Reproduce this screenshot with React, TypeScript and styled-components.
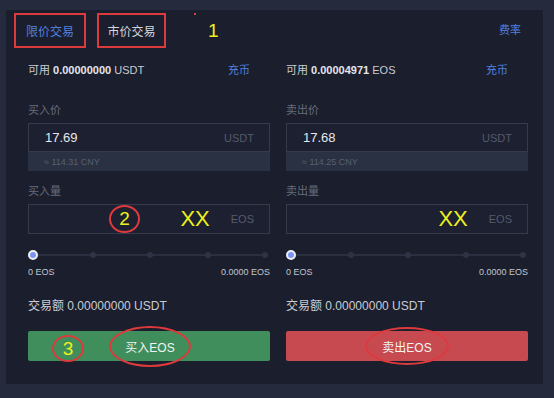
import React from "react"
import styled, { createGlobalStyle } from "styled-components"

const colors = {
  page: "#252a3c",
  panel: "#1b1e2c",
  text: "#c9ccd4",
  muted: "#666c7d",
  blue: "#4f80e0",
  border: "#363b4c",
  field: "#1c2030",
  strip: "#2a3142",
  green: "#3f8e5c",
  red: "#c84a51",
  mark: "#dc3a3d",
  yellow: "#eef01c",
}

const GlobalStyle = createGlobalStyle`
  html, body {
    margin: 0;
    padding: 0;
    background: ${colors.page};
    font-family: "Liberation Sans", "Noto Sans CJK SC", sans-serif;
  }
`

type Side = "buy" | "sell"

const sides = {
  buy: {
    balance: "0.00000000",
    coin: "USDT",
    priceLabel: "买入价",
    price: "17.69",
    cny: "≈ 114.31 CNY",
    amountLabel: "买入量",
    action: "买入EOS",
  },
  sell: {
    balance: "0.00004971",
    coin: "EOS",
    priceLabel: "卖出价",
    price: "17.68",
    cny: "≈ 114.25 CNY",
    amountLabel: "卖出量",
    action: "卖出EOS",
  },
}

const TradeColumn: React.FC<{ side: Side }> = ({ side }) => {
  const d = sides[side]
  return (
    <Column>
      <BalanceRow>
        <span>
          可用 <b>{d.balance}</b> {d.coin}
        </span>
        <Link>充币</Link>
      </BalanceRow>
      <Label $top={19}>{d.priceLabel}</Label>
      <Field>
        <Value>{d.price}</Value>
        <Unit>USDT</Unit>
      </Field>
      <CnyStrip>{d.cny}</CnyStrip>
      <Label $top={12}>{d.amountLabel}</Label>
      <Field $height={30}>
        {side === "buy" && <StepMark>2</StepMark>}
        <Value />
        <Note>XX</Note>
        <Unit>EOS</Unit>
      </Field>
      <Slider>
        <Track />
        {[0, 1, 2, 3, 4].map((i) => (
          <Stop key={i} $active={i === 0} />
        ))}
      </Slider>
      <SliderLabels>
        <span>0 EOS</span>
        <span>0.0000 EOS</span>
      </SliderLabels>
      <Total>交易额 0.00000000 USDT</Total>
      <ActionButton $side={side}>
        {side === "buy" && <ButtonMark>3</ButtonMark>}
        <Circled $side={side}>{d.action}</Circled>
      </ActionButton>
    </Column>
  )
}

export default function App() {
  return (
    <>
      <GlobalStyle />
      <Page>
        <Panel>
          <TabBar>
            <Tab $active $width={72}>
              限价交易
            </Tab>
            <Tab $width={69}>市价交易</Tab>
            <Dot />
            <StepOne>1</StepOne>
            <Fee>费率</Fee>
          </TabBar>
          <Columns>
            <TradeColumn side="buy" />
            <TradeColumn side="sell" />
          </Columns>
        </Panel>
      </Page>
    </>
  )
}

const Page = styled.div`
  width: 554px;
  height: 398px;
  padding: 10px 11px 14px 6px;
  box-sizing: border-box;
`

const Panel = styled.div`
  height: 100%;
  background: ${colors.panel};
  display: flex;
  flex-direction: column;
`

const TabBar = styled.div`
  height: 42px;
  display: flex;
  align-items: flex-start;
  padding: 3px 22px 0 8px;
  gap: 11px;
  position: relative;
`

const Tab = styled.div<{ $active?: boolean; $width: number }>`
  width: ${(p) => p.$width}px;
  height: 35px;
  box-sizing: border-box;
  border: 2px solid ${colors.mark};
  display: flex;
  align-items: center;
  justify-content: center;
  white-space: nowrap;
  font-size: 12px;
  color: ${(p) => (p.$active ? colors.blue : "#d4d6dc")};
`

const Dot = styled.span`
  position: absolute;
  left: 188px;
  top: 3px;
  width: 2px;
  height: 2px;
  background: ${colors.mark};
`

const StepOne = styled.span`
  margin-left: 31px;
  line-height: 35px;
  font-size: 19px;
  color: ${colors.yellow};
`

const Fee = styled.span`
  margin-left: auto;
  line-height: 35px;
  font-size: 11px;
  color: ${colors.blue};
`

const Columns = styled.div`
  display: grid;
  grid-template-columns: 242px 242px;
  gap: 16px;
  padding: 0 15px 0 22px;
`

const Column = styled.div`
  display: flex;
  flex-direction: column;
`

const BalanceRow = styled.div`
  height: 28px;
  display: flex;
  align-items: center;
  justify-content: space-between;
  padding-right: 20px;
  font-size: 11px;
  color: ${colors.text};
  b {
    color: #e4e6ec;
  }
`

const Link = styled.span`
  color: ${colors.blue};
`

const Label = styled.div<{ $top: number }>`
  margin-top: ${(p) => p.$top}px;
  line-height: 16px;
  font-size: 11px;
  color: ${colors.muted};
`

const Field = styled.div<{ $height?: number }>`
  position: relative;
  margin-top: 5px;
  height: ${(p) => p.$height ?? 29}px;
  box-sizing: border-box;
  border: 1px solid ${colors.border};
  background: ${colors.field};
  display: flex;
  align-items: center;
  padding: 0 15px 0 16px;
`

const Value = styled.span`
  flex: 1;
  font-size: 13px;
  color: #e6e8ee;
`

const Unit = styled.span`
  font-size: 11px;
  color: #555b6b;
`

const Note = styled.span`
  font-size: 22px;
  color: ${colors.yellow};
  margin-right: 21px;
`

const StepMark = styled.span`
  position: absolute;
  left: 80px;
  top: 0;
  width: 31px;
  height: 28px;
  box-sizing: border-box;
  border: 2px solid ${colors.mark};
  border-radius: 50%;
  display: flex;
  align-items: center;
  justify-content: center;
  font-size: 19px;
  color: ${colors.yellow};
`

const CnyStrip = styled.div`
  height: 19px;
  background: ${colors.strip};
  padding-left: 16px;
  display: flex;
  align-items: center;
  font-size: 9px;
  color: #586074;
`

const Slider = styled.div`
  position: relative;
  margin-top: 15px;
  height: 12px;
  padding: 0 2px 0 0;
  display: flex;
  align-items: center;
  justify-content: space-between;
`

const Track = styled.div`
  position: absolute;
  left: 5px;
  right: 3px;
  top: 5px;
  height: 2px;
  background: #2a2f40;
`

const Stop = styled.span<{ $active?: boolean }>`
  position: relative;
  width: ${(p) => (p.$active ? 10 : 6)}px;
  height: ${(p) => (p.$active ? 10 : 6)}px;
  border-radius: 50%;
  box-sizing: border-box;
  background: ${(p) => (p.$active ? "#7c95f2" : "#2e3446")};
  border: ${(p) => (p.$active ? "2px solid #eef0f8" : "none")};
`

const SliderLabels = styled.div`
  margin-top: 4px;
  line-height: 14px;
  display: flex;
  justify-content: space-between;
  font-size: 9px;
  color: #c3c6ce;
`

const Total = styled.div`
  margin-top: 19px;
  line-height: 16px;
  font-size: 12px;
  color: ${colors.text};
`

const ActionButton = styled.div<{ $side: Side }>`
  position: relative;
  margin-top: 17px;
  height: 30px;
  border-radius: 2px;
  background: ${(p) => (p.$side === "buy" ? colors.green : colors.red)};
  display: flex;
  align-items: center;
  justify-content: center;
  font-size: 12px;
  color: #f2f4f2;
`

const Circled = styled.span<{ $side: Side }>`
  width: ${(p) => (p.$side === "buy" ? 82 : 84)}px;
  height: ${(p) => (p.$side === "buy" ? 41 : 38)}px;
  margin-left: ${(p) => (p.$side === "buy" ? 2 : 0)}px;
  box-sizing: border-box;
  border: 2px solid ${colors.mark};
  border-radius: 50%;
  display: flex;
  align-items: center;
  justify-content: center;
`

const ButtonMark = styled.span`
  position: absolute;
  left: 24px;
  top: 4px;
  width: 32px;
  height: 27px;
  box-sizing: border-box;
  border: 2px solid ${colors.mark};
  border-radius: 50%;
  display: flex;
  align-items: center;
  justify-content: center;
  font-size: 19px;
  color: ${colors.yellow};
`
